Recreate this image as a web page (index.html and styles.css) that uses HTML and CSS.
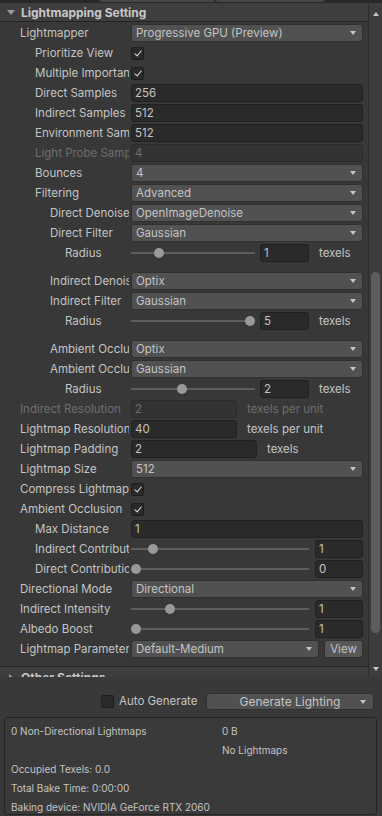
FILE: index.html
```html
<!DOCTYPE html>
<html lang="en">
<head>
    <meta charset="UTF-8">
    <meta name="viewport" content="width=device-width, initial-scale=1.0">
    <title>Lighting - Lightmapping Settings</title>
    <link rel="stylesheet" href="styles.css">
</head>
<body>
    <div class="window">
        <div class="topbar">
            <span class="tab tab-a"></span>
            <span class="tab tab-b"></span>
        </div>

        <div class="scroll-view">
            <div class="inspector">
                <div class="foldout">
                    <span class="caret"></span>
                    <span class="title">Lightmapping Settings</span>
                </div>

                <div class="props">
                    <div class="row"><label class="lbl">Lightmapper</label><div class="dropdown">Progressive GPU (Preview)</div></div>
                    <div class="row"><label class="lbl ind1">Prioritize View</label><span class="check on"></span></div>
                    <div class="row"><label class="lbl ind1">Multiple Importance Sampling</label><span class="check on"></span></div>
                    <div class="row"><label class="lbl ind1">Direct Samples</label><div class="field">256</div></div>
                    <div class="row"><label class="lbl ind1">Indirect Samples</label><div class="field">512</div></div>
                    <div class="row"><label class="lbl ind1">Environment Samples</label><div class="field">512</div></div>
                    <div class="row disabled"><label class="lbl ind1">Light Probe Sample Multiplier</label><div class="field">4</div></div>
                    <div class="row"><label class="lbl ind1">Bounces</label><div class="dropdown">4</div></div>
                    <div class="row"><label class="lbl ind1">Filtering</label><div class="dropdown">Advanced</div></div>
                    <div class="row"><label class="lbl ind2">Direct Denoiser</label><div class="dropdown">OpenImageDenoise</div></div>
                    <div class="row"><label class="lbl ind2">Direct Filter</label><div class="dropdown">Gaussian</div></div>
                    <div class="row group-end">
                        <label class="lbl ind3">Radius</label>
                        <div class="slider short"><span class="track"></span><span class="thumb" style="--v:0.2"></span></div>
                        <div class="field num">1</div><span class="unit">texels</span>
                    </div>

                    <div class="row"><label class="lbl ind2">Indirect Denoiser</label><div class="dropdown">Optix</div></div>
                    <div class="row"><label class="lbl ind2">Indirect Filter</label><div class="dropdown">Gaussian</div></div>
                    <div class="row group-end">
                        <label class="lbl ind3">Radius</label>
                        <div class="slider short"><span class="track"></span><span class="thumb" style="--v:1"></span></div>
                        <div class="field num">5</div><span class="unit">texels</span>
                    </div>

                    <div class="row"><label class="lbl ind2">Ambient Occlusion Denoiser</label><div class="dropdown">Optix</div></div>
                    <div class="row"><label class="lbl ind2">Ambient Occlusion Filter</label><div class="dropdown">Gaussian</div></div>
                    <div class="row">
                        <label class="lbl ind3">Radius</label>
                        <div class="slider short"><span class="track"></span><span class="thumb" style="--v:0.4"></span></div>
                        <div class="field num">2</div><span class="unit">texels</span>
                    </div>

                    <div class="row disabled"><label class="lbl">Indirect Resolution</label><div class="field res">2</div><span class="unit">texels per unit</span></div>
                    <div class="row"><label class="lbl">Lightmap Resolution</label><div class="field res">40</div><span class="unit">texels per unit</span></div>
                    <div class="row"><label class="lbl">Lightmap Padding</label><div class="field pad">2</div><span class="unit">texels</span></div>
                    <div class="row"><label class="lbl">Lightmap Size</label><div class="dropdown">512</div></div>
                    <div class="row"><label class="lbl">Compress Lightmaps</label><span class="check on"></span></div>
                    <div class="row"><label class="lbl">Ambient Occlusion</label><span class="check on"></span></div>
                    <div class="row"><label class="lbl ind1">Max Distance</label><div class="field">1</div></div>
                    <div class="row">
                        <label class="lbl ind1">Indirect Contribution</label>
                        <div class="slider"><span class="track"></span><span class="thumb" style="--v:0.1"></span></div>
                        <div class="field num wide">1</div>
                    </div>
                    <div class="row">
                        <label class="lbl ind1">Direct Contribution</label>
                        <div class="slider"><span class="track"></span><span class="thumb" style="--v:0"></span></div>
                        <div class="field num wide">0</div>
                    </div>
                    <div class="row"><label class="lbl">Directional Mode</label><div class="dropdown">Directional</div></div>
                    <div class="row">
                        <label class="lbl">Indirect Intensity</label>
                        <div class="slider"><span class="track"></span><span class="thumb" style="--v:0.2"></span></div>
                        <div class="field num wide">1</div>
                    </div>
                    <div class="row">
                        <label class="lbl">Albedo Boost</label>
                        <div class="slider"><span class="track"></span><span class="thumb" style="--v:0"></span></div>
                        <div class="field num wide">1</div>
                    </div>
                    <div class="row"><label class="lbl">Lightmap Parameters</label><div class="dropdown">Default-Medium</div><button class="btn view">View</button></div>
                </div>

                <div class="foldout closed">
                    <span class="caret"></span>
                    <span class="title">Other Settings</span>
                </div>
            </div>

            <div class="scrollbar">
                <span class="scroll-btn up"></span>
                <div class="scroll-track">
                    <div class="scroll-thumb" style="margin-top:247px;height:361px"></div>
                </div>
                <span class="scroll-btn down"></span>
            </div>
        </div>

        <div class="bake-panel">
            <div class="bake-bar">
                <span class="check"></span>
                <span class="bake-label">Auto Generate</span>
                <button class="btn generate">Generate Lighting</button>
            </div>
            <div class="bake-info">
                <span>0 Non-Directional Lightmaps</span><span>0 B</span>
                <span></span><span>No Lightmaps</span>
                <span class="full">Occupied Texels: 0.0</span>
                <span class="full">Total Bake Time: 0:00:00</span>
                <span class="full">Baking device: NVIDIA GeForce RTX 2060</span>
            </div>
        </div>
    </div>
</body>
</html>
```

FILE: styles.css
```css
body {
    margin: 0;
    padding: 0;
    background-color: #383838;
    color: #c4c4c4;
    font-family: Inter, 'Noto Sans', sans-serif;
    font-size: 11.5px;
}

.window {
    width: 382px;
    height: 816px;
    display: flex;
    flex-direction: column;
    overflow: hidden;
}

/* leftover of the toolbar above */
.topbar {
    height: 3px;
    flex: 0 0 3px;
    display: flex;
    background: #282828;
    padding-left: 100px;
}

.tab {
    height: 2px;
    background: #464646;
    border-radius: 0 0 3px 3px;
}

.tab-a { width: 115px; }
.tab-b { width: 108px; margin-left: 1px; }

.scroll-view {
    height: 674px;
    flex: 0 0 674px;
    display: flex;
    overflow: hidden;
}

.inspector {
    flex: 1;
    overflow: hidden;
}

.foldout {
    height: 18px;
    display: flex;
    align-items: center;
    background: #3e3e3e;
    border-bottom: 1px solid #242424;
    font-weight: 700;
    font-size: 12px;
    color: #c8c8c8;
}

.foldout .caret {
    width: 0;
    height: 0;
    margin-left: 7px;
    margin-right: 6px;
    border-left: 4px solid transparent;
    border-right: 4px solid transparent;
    border-top: 5px solid #9a9a9a;
}

.foldout.closed {
    margin-top: 8px;
    border-top: 1px solid #242424;
    border-bottom: none;
    height: 21px;
}

.foldout.closed .caret {
    margin-left: 9px;
    margin-right: 7px;
    border-top: 4px solid transparent;
    border-bottom: 4px solid transparent;
    border-left: 5px solid #9a9a9a;
    border-right: none;
}

.foldout .title {
    width: 125px;
    overflow: hidden;
    white-space: nowrap;
}

.props {
    padding: 2px 5px 0 0;
}

.row {
    height: 18px;
    margin-bottom: 2px;
    display: flex;
    align-items: center;
}

.row.group-end {
    margin-bottom: 10px;
}

.lbl {
    flex: 0 0 auto;
    width: 129px;
    margin-right: 2px;
    box-sizing: border-box;
    padding-left: 20px;
    overflow: hidden;
    white-space: nowrap;
    line-height: 18px;
}

.lbl.ind1 { padding-left: 35px; }
.lbl.ind2 { padding-left: 50px; }
.lbl.ind3 { padding-left: 65px; }

.field,
.dropdown {
    height: 18px;
    box-sizing: border-box;
    border-radius: 3px;
    line-height: 16px;
    white-space: nowrap;
    overflow: hidden;
}

.field {
    flex: 1;
    background: #2a2a2a;
    border: 1px solid #212121;
    padding-left: 3px;
}

.field.num { flex: 0 0 49px; margin-left: 5px; }
.field.num.wide { flex: 0 0 48px; margin-left: 6px; }
.field.res { flex: 0 0 106px; }
.field.pad { flex: 0 0 126px; }

.unit {
    margin-left: 10px;
    white-space: nowrap;
}

.dropdown {
    flex: 1;
    position: relative;
    background: #515151;
    border: 1px solid #303030;
    padding-left: 4px;
}

.dropdown::after {
    content: "";
    position: absolute;
    right: 6px;
    top: 6px;
    border-left: 3px solid transparent;
    border-right: 3px solid transparent;
    border-top: 4px solid #c4c4c4;
}

.check {
    width: 13px;
    height: 13px;
    box-sizing: border-box;
    background: #2a2a2a;
    border: 1px solid #1e1e1e;
    border-radius: 2px;
    position: relative;
}

.check.on::after {
    content: "";
    position: absolute;
    left: 4px;
    top: 1px;
    width: 3px;
    height: 6px;
    border-right: 1.6px solid #e0e0e0;
    border-bottom: 1.6px solid #e0e0e0;
    transform: rotate(40deg);
}

.slider {
    flex: 1;
    height: 18px;
    position: relative;
}

.slider.short {
    flex: 0 0 124px;
}

.slider .track {
    position: absolute;
    left: 0;
    right: 0;
    top: 8px;
    height: 2px;
    background: #5e5e5e;
}

.slider .thumb {
    position: absolute;
    top: 4px;
    left: calc((100% - 10px) * var(--v));
    width: 10px;
    height: 10px;
    border-radius: 50%;
    background: #999999;
}

.disabled .lbl,
.disabled .field,
.disabled .unit {
    color: #6e6e6e;
}

.disabled .field {
    background: #333333;
    border-color: #2b2b2b;
}

.btn {
    height: 18px;
    box-sizing: border-box;
    background: #585858;
    border: 1px solid #303030;
    border-radius: 3px;
    color: #c4c4c4;
    font-family: inherit;
    font-size: 11.5px;
    padding: 0;
}

.btn.view {
    flex: 0 0 39px;
    margin-left: 5px;
}

.scrollbar {
    flex: 0 0 13px;
    display: flex;
    flex-direction: column;
    align-items: center;
    background: #3d3d3d;
    border-left: 1px solid #2c2c2c;
}

.scroll-btn.up {
    margin-top: 9px;
    margin-bottom: 9px;
    width: 0;
    height: 0;
    border-left: 3px solid transparent;
    border-right: 3px solid transparent;
    border-bottom: 4px solid #c4c4c4;
}

.scroll-btn.down {
    width: 0;
    height: 0;
    margin-bottom: 6px;
    border-left: 3px solid transparent;
    border-right: 3px solid transparent;
    border-top: 4px solid #c4c4c4;
}

.scroll-track {
    flex: 1;
    width: 9px;
}

.scroll-thumb {
    width: 9px;
    background: #5d5d5d;
    border-radius: 5px;
}

.bake-panel {
    flex: 1;
    background: #393939;
    padding-top: 16px;
}

.bake-bar {
    height: 16px;
    display: flex;
    align-items: center;
    padding-left: 101px;
    padding-right: 8px;
}

.bake-label {
    margin-left: 5px;
    white-space: nowrap;
}

.btn.generate {
    margin-left: auto;
    width: 168px;
    height: 17px;
    position: relative;
    background: #515151;
    font-size: 12px;
}

.btn.generate::after {
    content: "";
    position: absolute;
    right: 7px;
    top: 6px;
    border-left: 3px solid transparent;
    border-right: 3px solid transparent;
    border-top: 4px solid #c4c4c4;
}

.bake-info {
    margin: 8px 5px 0 4px;
    height: 98px;
    box-sizing: border-box;
    border: 1px solid #242424;
    border-radius: 3px;
    background: #3a3a3a;
    padding: 3px 6px;
    display: grid;
    grid-template-columns: 211px 1fr;
    grid-auto-rows: 19px;
    align-items: center;
    font-size: 10px;
    white-space: nowrap;
}

.bake-info .full {
    grid-column: 1 / 3;
}
```
